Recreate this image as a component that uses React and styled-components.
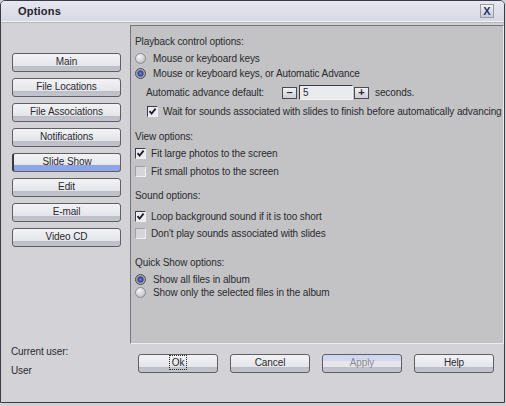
import React, { useState } from 'react';
import styled, { createGlobalStyle, css } from 'styled-components';

const GlobalStyle = createGlobalStyle`
  html, body {
    margin: 0;
    padding: 0;
    background: #d2d2d6;
  }
  body {
    font-family: "Liberation Sans", Arial, sans-serif;
    font-size: 10px;
    letter-spacing: -0.1px;
    color: #2a2a2e;
  }
`;

const Window = styled.div`
  width: 503px;
  height: 401px;
  display: flex;
  flex-direction: column;
  border: 1px solid #3c3c44;
  border-radius: 5px 5px 0 0;
  background: #d3d3d7;
  overflow: hidden;
`;

const TitleBar = styled.div`
  height: 20px;
  flex: none;
  display: flex;
  align-items: center;
  justify-content: space-between;
  padding: 0 4px 0 17px;
  background: linear-gradient(#e6e7f0, #d7d8e3);
  border-bottom: 1px solid #f4f4f8;
  box-shadow: 0 1px 0 #b4b4bc;
`;

const Title = styled.span`
  font-size: 11px;
  font-weight: bold;
  color: #23232e;
  letter-spacing: 0.2px;
`;

const CloseButton = styled.button`
  width: 14px;
  height: 14px;
  padding: 0;
  display: flex;
  align-items: center;
  justify-content: center;
  background: linear-gradient(#f2f2f6, #c9cad4);
  border: 1px solid #9a9aa6;
  color: #233377;
  font: bold 11px "Liberation Sans", Arial, sans-serif;
  margin-right: 6px;
`;

const Body = styled.div`
  flex: 1;
  display: flex;
  min-height: 0;
`;

const Sidebar = styled.div`
  width: 129px;
  flex: none;
  display: flex;
  flex-direction: column;
  justify-content: space-between;
  padding: 31px 0 25px 0;
`;

const NavList = styled.div`
  display: flex;
  flex-direction: column;
  gap: 6px;
  padding-left: 11px;
`;

const NavButton = styled.button`
  width: 109px;
  height: 19px;
  padding: 0 0 2px;
  border: 1px solid #5e5e66;
  border-radius: 3px;
  font: 10px "Liberation Sans", Arial, sans-serif;
  letter-spacing: -0.1px;
  color: #2a2a2e;
  background: linear-gradient(#f3f3f6 0%, #e4e5ea 70%, #bebec6 71%, #c4c4cc 100%);
  ${(p) =>
    p.$active &&
    css`
      border-left: 2px solid #3a3a42;
      background: linear-gradient(#f3f3f6 0%, #e6e7ec 62%, #8ea4e6 63%, #90a6e8 100%);
    `}
`;

const UserInfo = styled.div`
  display: flex;
  flex-direction: column;
  gap: 7px;
  padding-left: 10px;
  line-height: 12px;
`;

const MainColumn = styled.div`
  flex: 1;
  min-width: 0;
  display: flex;
  flex-direction: column;
  padding: 3px 0 26px;
`;

const Panel = styled.div`
  height: 319px;
  box-sizing: border-box;
  background: #c3c3c5;
  border-top: 1px solid #75757c;
  border-left: 1px solid #75757c;
  border-right: 1px solid #ececf0;
  border-bottom: 1px solid #ececf0;
  padding: 9px 0 0 4px;
  overflow: hidden;
  white-space: nowrap;
`;

const Heading = styled.div`
  height: 14px;
  line-height: 14px;
  margin-top: ${(p) => p.$mt || 0}px;
`;

const Row = styled.label`
  display: flex;
  align-items: center;
  gap: ${(p) => p.$gap || 5}px;
  height: ${(p) => p.$h || 14}px;
  margin-top: ${(p) => p.$mt || 0}px;
  padding-left: ${(p) => p.$indent || 0}px;
`;

const Radio = styled.span`
  width: 11px;
  height: 11px;
  flex: none;
  border-radius: 50%;
  box-sizing: border-box;
  border: 1px solid #8c8c94;
  background: radial-gradient(circle at 35% 30%, #f4f4f6 0%, #d6d6da 50%, #a6a6ae 100%);
  ${(p) =>
    p.$on &&
    css`
      border-color: #4a4a58;
      background: radial-gradient(circle at 50% 50%, #6e8ae0 0%, #2c3f94 40%, #9a9aa6 55%, #d8d8de 100%);
    `}
`;

const Check = styled.span`
  width: 11px;
  height: 11px;
  flex: none;
  box-sizing: border-box;
  display: flex;
  align-items: center;
  justify-content: center;
  border-top: 1px solid #3c3c44;
  border-left: 1px solid #3c3c44;
  border-right: 1px solid #f0f0f4;
  border-bottom: 1px solid #f0f0f4;
  background: ${(p) => (p.$on ? '#ebebf0' : '#d6d6da')};
  ${(p) =>
    !p.$on &&
    css`
      border-top-color: #a0a0a8;
      border-left-color: #a0a0a8;
    `}
`;

const SpinRow = styled.div`
  display: flex;
  align-items: center;
  height: 17px;
  margin-top: 3px;
  padding-left: 11px;
`;

const SpinLabel = styled.span`
  width: 136px;
`;

const SpinButton = styled.button`
  width: 15px;
  height: 12px;
  padding: 0;
  display: flex;
  align-items: center;
  justify-content: center;
  border: 1px solid #4a4a52;
  background: linear-gradient(#f2f2f5, #cdcdd3);
  font: bold 11px "Liberation Sans", Arial, sans-serif;
  color: #2a2a30;
  line-height: 1;
`;

const SpinInput = styled.input`
  width: 54px;
  height: 15px;
  box-sizing: border-box;
  margin: 0 1px 0 2px;
  padding: 0 3px;
  border-top: 1px solid #3a3a42;
  border-left: 1px solid #3a3a42;
  border-right: 1px solid #f2f2f4;
  border-bottom: 1px solid #f2f2f4;
  background: #e9ebef;
  font: 10px "Liberation Sans", Arial, sans-serif;
  color: #2a2a2e;
  outline: none;
`;

const Suffix = styled.span`
  margin-left: 6px;
`;

const ButtonRow = styled.div`
  display: flex;
  gap: 12px;
  padding: 10px 0 0 8px;
`;

const DialogButton = styled.button`
  width: 80px;
  height: 19px;
  padding: 0 0 2px;
  border: 1px solid #5e5e66;
  border-radius: 3px;
  font: 10px "Liberation Sans", Arial, sans-serif;
  letter-spacing: -0.1px;
  color: ${(p) => (p.disabled ? '#8a8a92' : '#2a2a2e')};
  background: ${(p) =>
    p.disabled
      ? 'linear-gradient(#d0d6f0 0%, #d4d9f0 35%, #e6e7ec 36%, #e4e5ea 70%, #bebec6 71%, #c4c4cc 100%)'
      : 'linear-gradient(#f3f3f6 0%, #e4e5ea 70%, #bebec6 71%, #c4c4cc 100%)'};
`;

const Focus = styled.span`
  display: inline-block;
  padding: 1px 2px;
  border: 1px dotted #2a2a2a;
`;

const CheckMark = () => (
  <svg width="9" height="9" viewBox="0 0 9 9">
    <path d="M1.5 4.2 L3.6 6.6 L7.6 1.6" fill="none" stroke="#1e1e2c" strokeWidth="1.8" />
  </svg>
);

const CheckItem = ({ on, children, ...rest }) => (
  <Row {...rest}>
    <Check $on={on}>{on && <CheckMark />}</Check>
    <span>{children}</span>
  </Row>
);

const RadioItem = ({ on, children, ...rest }) => (
  <Row $gap={7} {...rest}>
    <Radio $on={on} />
    <span>{children}</span>
  </Row>
);

const navItems = ['Main', 'File Locations', 'File Associations', 'Notifications', 'Slide Show', 'Edit', 'E-mail', 'Video CD'];

export default function App() {
  const [active, setActive] = useState('Slide Show');
  const [seconds, setSeconds] = useState(5);

  return (
    <>
      <GlobalStyle />
      <Window>
        <TitleBar>
          <Title>Options</Title>
          <CloseButton>X</CloseButton>
        </TitleBar>
        <Body>
          <Sidebar>
            <NavList>
              {navItems.map((item) => (
                <NavButton key={item} $active={item === active} onClick={() => setActive(item)}>
                  {item}
                </NavButton>
              ))}
            </NavList>
            <UserInfo>
              <span>Current user:</span>
              <span>User</span>
            </UserInfo>
          </Sidebar>
          <MainColumn>
            <Panel>
              <Heading>Playback control options:</Heading>
              <RadioItem $mt={2} $h={15}>Mouse or keyboard keys</RadioItem>
              <RadioItem on $h={15}>Mouse or keyboard keys, or Automatic Advance</RadioItem>
              <SpinRow>
                <SpinLabel>Automatic advance default:</SpinLabel>
                <SpinButton onClick={() => setSeconds(Math.max(1, seconds - 1))}>–</SpinButton>
                <SpinInput value={seconds} onChange={(e) => setSeconds(e.target.value)} />
                <SpinButton onClick={() => setSeconds(Number(seconds) + 1)}>+</SpinButton>
                <Suffix>seconds.</Suffix>
              </SpinRow>
              <CheckItem on $mt={3} $indent={12}>
                Wait for sounds associated with slides to finish before automatically advancing
              </CheckItem>

              <Heading $mt={12}>View options:</Heading>
              <CheckItem on $mt={2}>Fit large photos to the screen</CheckItem>
              <CheckItem $mt={4}>Fit small photos to the screen</CheckItem>

              <Heading $mt={11}>Sound options:</Heading>
              <CheckItem on $mt={6}>Loop background sound if it is too short</CheckItem>
              <CheckItem $mt={3}>Don't play sounds associated with slides</CheckItem>

              <Heading $mt={16}>Quick Show options:</Heading>
              <RadioItem on $mt={3} $h={13}>Show all files in album</RadioItem>
              <RadioItem $h={13}>Show only the selected files in the album</RadioItem>
            </Panel>
            <ButtonRow>
              <DialogButton>
                <Focus>Ok</Focus>
              </DialogButton>
              <DialogButton>Cancel</DialogButton>
              <DialogButton disabled>Apply</DialogButton>
              <DialogButton>Help</DialogButton>
            </ButtonRow>
          </MainColumn>
        </Body>
      </Window>
    </>
  );
}
